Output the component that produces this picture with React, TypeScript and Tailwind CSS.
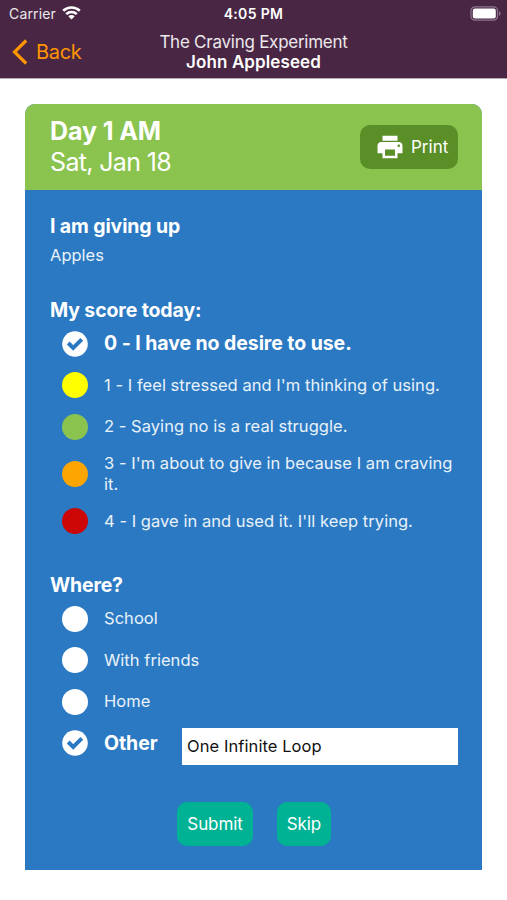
import { useState } from "react";
import { MdPrint } from "react-icons/md";

const scores = [
  { color: "bg-white", label: "0 - I have no desire to use." },
  { color: "bg-[#ffff00]", label: "1 - I feel stressed and I'm thinking of using." },
  { color: "bg-[#8bc34f]", label: "2 - Saying no is a real struggle." },
  { color: "bg-[#ffa500]", label: "3 - I'm about to give in because I am craving it." },
  { color: "bg-[#cc0505]", label: "4 - I gave in and used it. I'll keep trying." },
];

const places = ["School", "With friends", "Home", "Other"];

const StatusBar = () => (
  <div className="flex h-7 items-center justify-between pl-[9px] pr-[6px] text-sm text-white/90">
    <div className="flex flex-1 items-center gap-[6px]">
      <span className="tracking-[0.15px]">Carrier</span>
      <svg width="19" height="14" viewBox="0 0 19 14" fill="none" stroke="#fff" className="-translate-y-px">
        <path d="M1.200 4.800a12 12 0 0 1 16.600 0" strokeWidth="2.6" />
        <path d="M4.200 8.100a7.700 7.700 0 0 1 10.600 0" strokeWidth="2.5" />
        <path d="M9.500 13.500 6.300 10.300a4.600 4.600 0 0 1 6.400 0Z" fill="#fff" stroke="none" />
      </svg>
    </div>
    <span className="mr-[3px] font-semibold tracking-[0.35px] text-white">4:05 PM</span>
    <div className="flex flex-1 justify-end">
      <svg width="31" height="15" viewBox="0 0 31 15" fill="none" className="-translate-y-px">
        <rect x="1" y="0.8" width="26.5" height="13.400" rx="4" stroke="#8d7789" strokeWidth="1.2" />
        <rect x="2.8" y="2.6" width="23" height="9.8" rx="2.2" fill="#fff" />
        <path d="M29 5.200v4.600c2-.8 2-3.800 0-4.600Z" fill="#8d7789" />
      </svg>
    </div>
  </div>
);

const NavBar = () => (
  <div className="flex h-[50px] items-start px-3 text-white">
    <button className="flex flex-1 items-center gap-2 pt-[9px] text-xl leading-[30px] tracking-[-0.3px] text-[#ff9500]">
      <svg width="16" height="26" viewBox="0 0 16 26" fill="none" stroke="currentColor" strokeWidth="3.2">
        <path d="M14.200 1.500 2.500 13l11.700 11.500" />
      </svg>
      Back
    </button>
    <div className="pt-1 text-center text-[17px] leading-5">
      <h1 className="tracking-[-0.25px] text-white/90">The Craving Experiment</h1>
      <h2 className="font-semibold tracking-[0.1px]">John Appleseed</h2>
    </div>
    <div className="flex-1" />
  </div>
);

const CheckedCircle = () => (
  <svg width="26" height="26" viewBox="0 0 26 26" fill="none" className="shrink-0">
    <circle cx="13" cy="13" r="12.800" fill="#fff" />
    <path d="M6.200 12l5 5 8.600-8.600" stroke="#2a79c2" strokeWidth="3.900" />
  </svg>
);

type OptionProps = {
  color: string;
  label: string;
  selected: boolean;
  onSelect: () => void;
};

const Option = ({ color, label, selected, onSelect }: OptionProps) => (
  <button onClick={onSelect} className="flex min-h-[41.500px] items-center py-[5.500px] text-left">
    {selected ? (
      <CheckedCircle />
    ) : (
      <span className={`size-[26px] shrink-0 rounded-full ${color}`} />
    )}
    <span
      className={
        selected
          ? "ml-4 text-[19.500px] font-bold leading-[25.500px] tracking-[-0.07px]"
          : "ml-4 text-[16.500px] leading-[21px] tracking-[0.04px] text-white/90"
      }
    >
      {label}
    </span>
  </button>
);

export default function App() {
  const [score, setScore] = useState(0);
  const [place, setPlace] = useState("Other");
  const [other, setOther] = useState("One Infinite Loop");

  return (
    <div className="min-h-[900px] w-full bg-white font-['Inter',sans-serif]">
      <header className="h-[79px] border-b border-[#b5abb4] bg-[#482644]">
        <StatusBar />
        <NavBar />
      </header>

      <main className="mx-[25px] mt-[25px] h-[766px] overflow-hidden rounded-t-[10px] bg-[#2a79c2] text-white">
        <div className="flex h-[86px] items-center justify-between bg-[#8bc34f] pl-[25px] pr-[24px]">
          <div className="text-[25px] leading-[31px]">
            <div className="font-bold tracking-[-0.1px]">Day 1 AM</div>
            <div className="tracking-[-0.65px]">Sat, Jan 18</div>
          </div>
          <button className="flex h-[44px] w-[98px] items-center gap-[6px] rounded-[10px] bg-[#5a8e26] pl-[15px] text-[17px]">
            <MdPrint size={30} />
            <span className="pt-[2px]">Print</span>
          </button>
        </div>

        <div className="flex flex-col pl-[25px] pr-[24px] pt-6">
          <h3 className="text-[19.500px] font-bold leading-[25px] tracking-[-0.12px]">I am giving up</h3>
          <p className="mt-[6px] text-[16.500px] leading-[21px] text-white/90">Apples</p>

          <h3 className="mt-8 text-[19.500px] font-bold leading-[25px] tracking-[-0.12px]">My score today:</h3>
          <div className="flex flex-col pl-3">
            {scores.map((item, i) => (
              <Option
                key={item.label}
                color={item.color}
                label={item.label}
                selected={score === i}
                onSelect={() => setScore(i)}
              />
            ))}
          </div>

          <h3 className="mt-[31px] text-[19.500px] font-bold leading-[25px] tracking-[-0.2px]">Where?</h3>
          <div className="flex flex-col pl-3">
            {places.map((name) => (
              <div key={name} className="flex h-[41.500px] items-center justify-between">
                <Option
                  color="bg-white"
                  label={name}
                  selected={place === name}
                  onSelect={() => setPlace(name)}
                />
                {name === "Other" && (
                  <input
                    value={other}
                    onChange={(e) => setOther(e.target.value)}
                    className="mt-[7px] h-[37px] w-[276px] bg-white px-[5px] pb-px text-[16.500px] tracking-[0.08px] text-[#111] outline-none"
                  />
                )}
              </div>
            ))}
          </div>

          <div className="mt-[38px] flex justify-center gap-6 text-[17px] tracking-[-0.1px]">
            <button className="h-[44px] w-[76px] rounded-[10px] bg-[#00b294] pt-[2px]">Submit</button>
            <button className="h-[44px] w-[54px] rounded-[10px] bg-[#00b294] pt-[2px]">Skip</button>
          </div>
        </div>
      </main>
    </div>
  );
}
